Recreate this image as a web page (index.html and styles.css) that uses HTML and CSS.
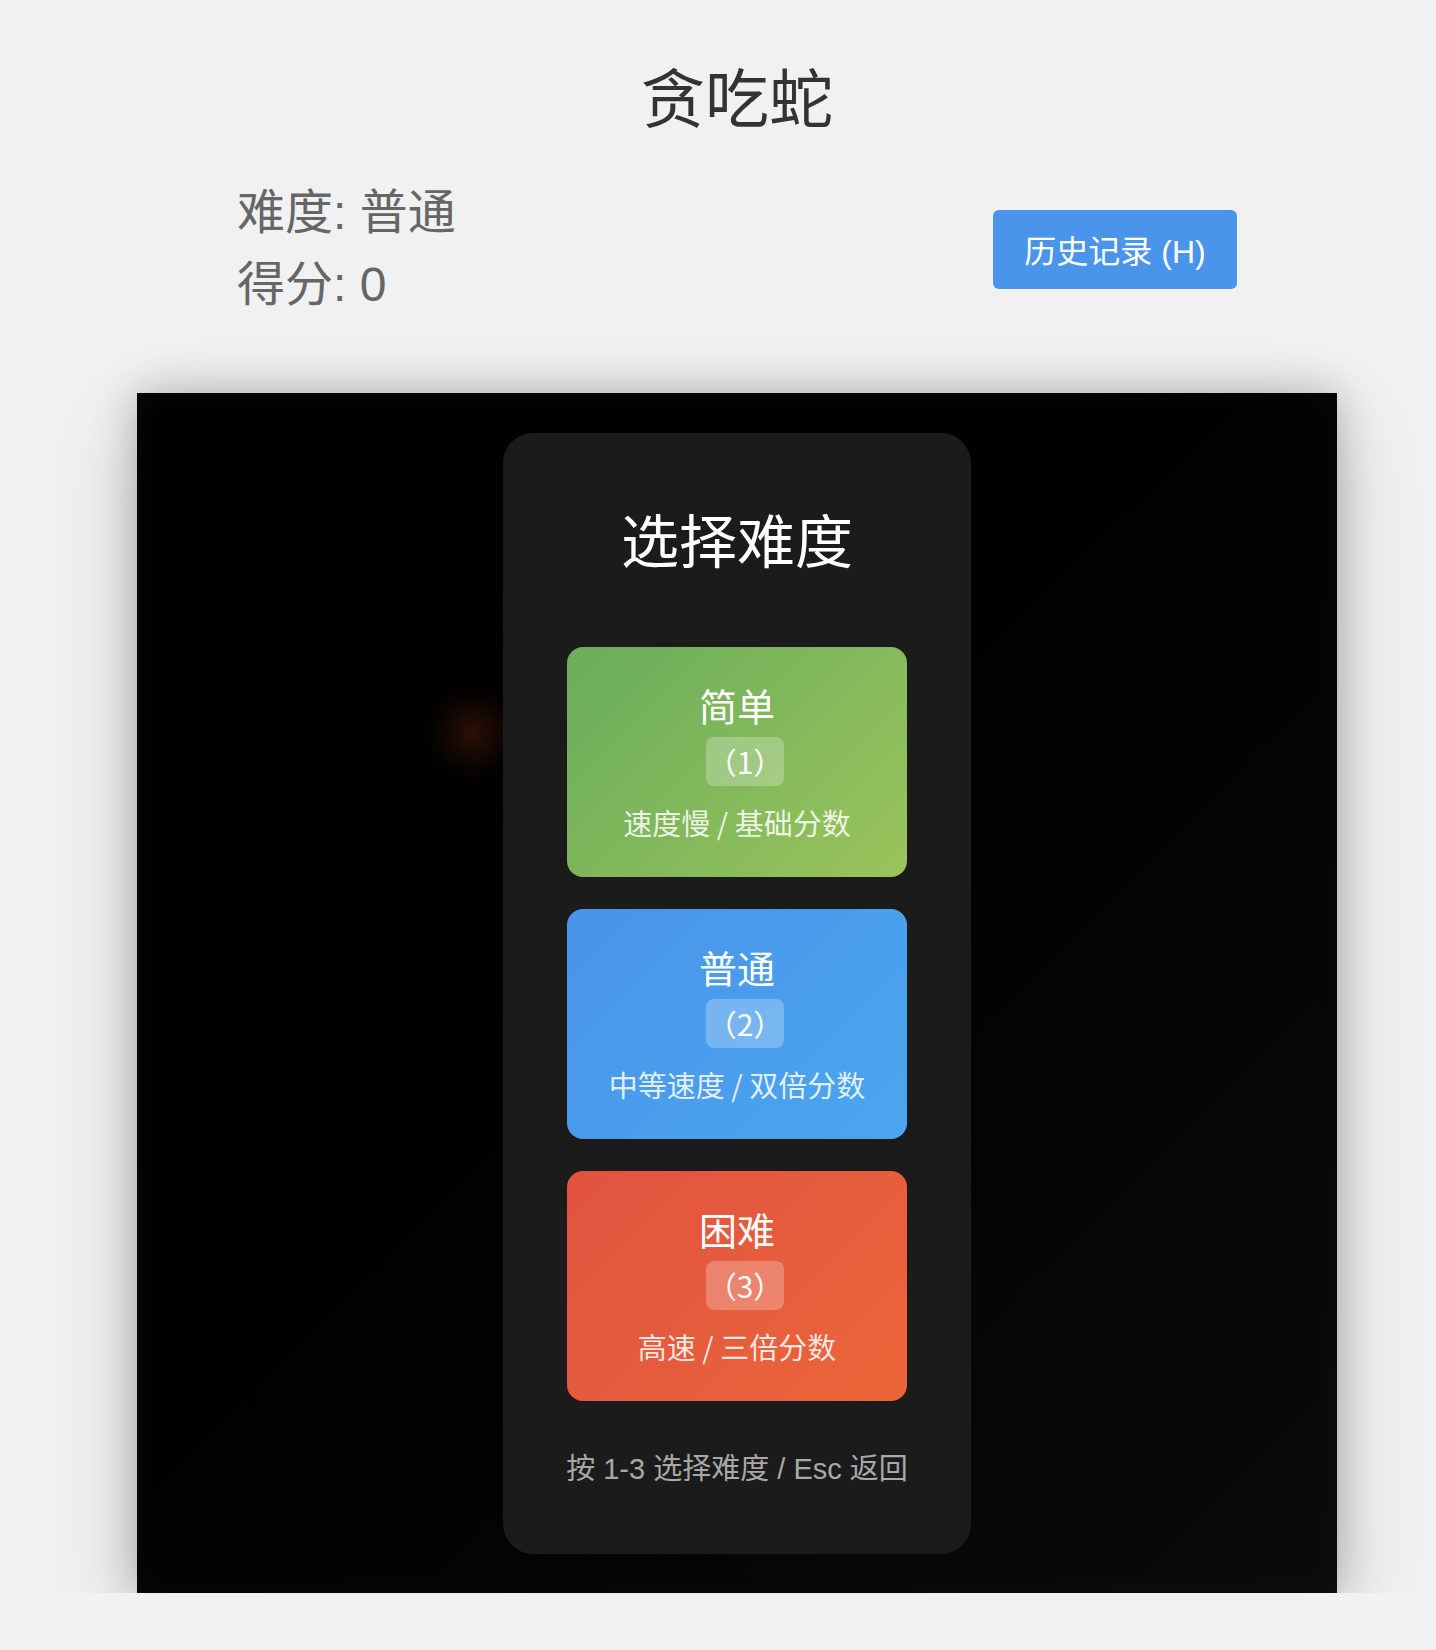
FILE: index.html
```html
<!DOCTYPE html>
<html lang="zh-CN">
<head>
<meta charset="utf-8">
<title>贪吃蛇</title>
<link rel="stylesheet" href="styles.css">
</head>
<body>
<div class="page">
  <h1 class="title">贪吃蛇</h1>
  <div class="info-row">
    <div class="info">
      <div class="info-line">难度: 普通</div>
      <div class="info-line">得分: 0</div>
    </div>
    <button class="history-btn">历史记录 (H)</button>
  </div>
  <div class="board">
    <div class="food-glow"></div>
    <div class="overlay">
      <div class="modal">
        <h2 class="modal-title">选择难度</h2>
        <div class="cards">
          <div class="card card-easy">
            <div class="card-name">简单</div>
            <div class="card-key">（1）</div>
            <div class="card-desc">速度慢 / 基础分数</div>
          </div>
          <div class="card card-normal">
            <div class="card-name">普通</div>
            <div class="card-key">（2）</div>
            <div class="card-desc">中等速度 / 双倍分数</div>
          </div>
          <div class="card card-hard">
            <div class="card-name">困难</div>
            <div class="card-key">（3）</div>
            <div class="card-desc">高速 / 三倍分数</div>
          </div>
        </div>
        <div class="hint">按 1-3 选择难度 / Esc 返回</div>
      </div>
    </div>
  </div>
</div>
</body>
</html>
```

FILE: styles.css
```css
html, body {
  margin: 0;
  padding: 0;
}

body {
  background: #f1f1f1;
  font-family: "Liberation Sans", "Noto Sans CJK SC", sans-serif;
  overflow: hidden;
}

.page {
  box-sizing: border-box;
  width: 1436px;
  padding-left: 38px;
  display: flex;
  flex-direction: column;
  align-items: center;
}

.title {
  margin: 46px 0 0;
  font-size: 64px;
  line-height: 96px;
  font-weight: normal;
  color: #333;
  font-family: "Noto Sans CJK SC", sans-serif;
}

.info-row {
  width: 1000px;
  margin-top: 35px;
  display: flex;
  justify-content: space-between;
  align-items: center;
}

.info-line {
  font-size: 48px;
  line-height: 72px;
  color: #666;
}

.history-btn {
  width: 244px;
  height: 79px;
  border: none;
  border-radius: 6px;
  background: #4a94ec;
  color: #fff;
  font-family: "Liberation Sans", "Noto Sans CJK SC", sans-serif;
  font-size: 32px;
  padding: 0;
  margin-right: 0;
}

.board {
  position: relative;
  width: 1200px;
  height: 1200px;
  margin-top: 72px;
  background: linear-gradient(135deg, #000 0%, #020202 55%, #0a0a0a 100%);
  box-shadow: 0 0 40px rgba(0, 0, 0, 0.25), 0 30px 90px rgba(0, 0, 0, 0.14), inset 0 0 40px rgba(255, 255, 255, 0.03);
}

.food-glow {
  position: absolute;
  left: 286px;
  top: 290px;
  width: 100px;
  height: 100px;
  border-radius: 50%;
  background: radial-gradient(circle, rgba(46, 16, 6, 0.95) 0%, rgba(36, 13, 5, 0.6) 30%, rgba(20, 7, 3, 0.25) 55%, rgba(0, 0, 0, 0) 72%);
}

.overlay {
  position: absolute;
  inset: 0;
  display: flex;
  align-items: center;
  justify-content: center;
}

.modal {
  width: 468px;
  box-sizing: border-box;
  padding: 63px 64px 64px;
  background: #1b1b1b;
  border-radius: 30px;
  display: flex;
  flex-direction: column;
  align-items: stretch;
  text-align: center;
}

.modal-title {
  margin: 0 0 66px;
  font-size: 58px;
  line-height: 85px;
  font-weight: normal;
  color: #fff;
  font-family: "Noto Sans CJK SC", sans-serif;
}

.cards {
  display: flex;
  flex-direction: column;
  gap: 32px;
}

.card {
  height: 230px;
  box-sizing: border-box;
  padding-top: 31px;
  border-radius: 16px;
  display: flex;
  flex-direction: column;
  align-items: center;
  color: #fff;
  font-family: "Noto Sans CJK SC", sans-serif;
}

.card-easy {
  background: linear-gradient(135deg, #69ad5b 0%, #84b95b 55%, #9bc45b 100%);
}

.card-normal {
  background: linear-gradient(135deg, #4a93ea 0%, #4a9eec 55%, #4ba6ee 100%);
}

.card-hard {
  background: linear-gradient(135deg, #e15340 0%, #e65d3d 55%, #ec6638 100%);
}

.card-name {
  font-size: 38px;
  line-height: 54px;
}

.card-key {
  margin-top: 5px;
  margin-left: 16px;
  width: 78px;
  height: 49px;
  box-sizing: border-box;
  padding: 0;
  border-radius: 8px;
  background: rgba(255, 255, 255, 0.25);
  font-size: 30px;
  line-height: 49px;
  white-space: nowrap;
}

.card-desc {
  margin-top: 15px;
  font-size: 29px;
  line-height: 42px;
  color: rgba(255, 255, 255, 0.85);
}

.hint {
  margin: 47px -30px 0;
  font-size: 29px;
  line-height: 42px;
  color: #a8a8a8;
  white-space: nowrap;
  font-family: "Liberation Sans", "Noto Sans CJK SC", sans-serif;
}
```
